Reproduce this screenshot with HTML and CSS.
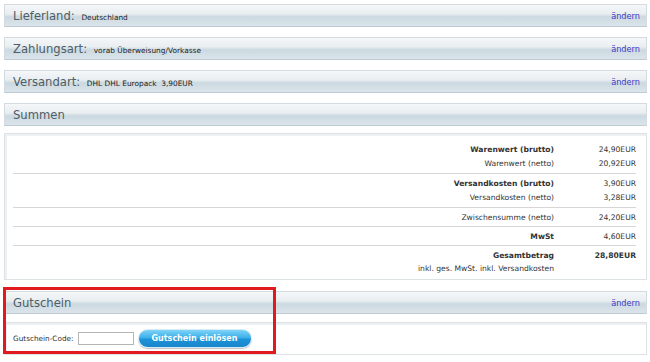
FILE: index.html
```html
<!DOCTYPE html>
<html lang="de">
<head>
    <meta charset="UTF-8">
    <title>Bestellung prüfen</title>
    <link rel="stylesheet" href="styles.css">
</head>
<body>
    <div class="checkout">
        <div class="bar">
            <h2>Lieferland: <span class="bar-value">Deutschland</span></h2>
            <a href="#" class="change-link">ändern</a>
        </div>

        <div class="bar">
            <h2>Zahlungsart: <span class="bar-value">vorab Überweisung/Vorkasse</span></h2>
            <a href="#" class="change-link">ändern</a>
        </div>

        <div class="bar">
            <h2>Versandart: <span class="bar-value">DHL DHL Europack&nbsp; 3,90EUR</span></h2>
            <a href="#" class="change-link">ändern</a>
        </div>

        <div class="bar bar-tight">
            <h2>Summen</h2>
        </div>

        <div class="box totals">
            <div class="totals-group">
                <div class="totals-row strong"><span class="label">Warenwert (brutto)</span><span class="value">24,90EUR</span></div>
                <div class="totals-row"><span class="label">Warenwert (netto)</span><span class="value">20,92EUR</span></div>
            </div>
            <div class="totals-group">
                <div class="totals-row strong"><span class="label">Versandkosten (brutto)</span><span class="value">3,90EUR</span></div>
                <div class="totals-row"><span class="label">Versandkosten (netto)</span><span class="value">3,28EUR</span></div>
            </div>
            <div class="totals-group single">
                <div class="totals-row"><span class="label">Zwischensumme (netto)</span><span class="value">24,20EUR</span></div>
            </div>
            <div class="totals-group single">
                <div class="totals-row strong"><span class="label">MwSt</span><span class="value">4,60EUR</span></div>
            </div>
            <div class="totals-group">
                <div class="totals-row strong total"><span class="label">Gesamtbetrag</span><span class="value">28,80EUR</span></div>
                <div class="totals-row note"><span class="label">inkl. ges. MwSt. inkl. Versandkosten</span><span class="value"></span></div>
            </div>
        </div>

        <div class="voucher">
            <div class="bar bar-tight">
                <h2>Gutschein</h2>
                <a href="#" class="change-link">ändern</a>
            </div>
            <div class="box voucher-form">
                <label for="voucher-code">Gutschein-Code:</label>
                <input type="text" id="voucher-code" class="voucher-input">
                <button class="btn-voucher">Gutschein einlösen</button>
            </div>
            <div class="highlight"></div>
        </div>
    </div>
</body>
</html>
```

FILE: styles.css
```css
body {
    font-family: 'DejaVu Sans', Verdana, sans-serif;
    margin: 0;
    padding: 4px 3px 4px 4px;
    background-color: #fff;
    color: #333;
}

.bar {
    display: flex;
    align-items: center;
    justify-content: space-between;
    box-sizing: border-box;
    height: 23px;
    padding: 0 6px 0 8px;
    margin-bottom: 10px;
    border: 1px solid #d3dbe0;
    border-bottom-color: #bccbd4;
    background: linear-gradient(#f5f7f8 0%, #e9eef1 42%, #ccd9e1 56%, #dbe4ea 100%);
}

.bar-tight {
    margin-bottom: 7px;
}

.bar h2 {
    margin: 0;
    font-size: 11.6px;
    font-weight: normal;
    color: #4f5d66;
    white-space: nowrap;
}

.bar-value {
    margin-left: 3px;
    font-size: 7.4px;
    color: #222;
}

.change-link {
    font-size: 8.2px;
    color: #3c3cc8;
    text-decoration: none;
}

.box {
    box-sizing: border-box;
    border: 1px solid #dde2e5;
    box-shadow: inset 2px 2px 0 #eef1f3;
    background-color: #fff;
}

.totals {
    height: 147px;
    padding: 6px 10px 0 8px;
    margin-bottom: 11px;
    font-size: 7.6px;
}

.totals-group {
    padding: 3px 0 2px;
    border-bottom: 1px solid #d6d6d6;
}

.totals-group:last-child {
    border-bottom: none;
}

.totals-row {
    display: flex;
    justify-content: flex-end;
    line-height: 14px;
}

.single .totals-row {
    line-height: 13px;
}

.note {
    line-height: 11px;
}

.totals-row .label {
    text-align: right;
}

.totals-row .value {
    width: 82px;
    flex-shrink: 0;
    text-align: right;
    font-weight: normal;
}

.strong .label {
    font-weight: bold;
}

.total .value {
    font-weight: bold;
}

.voucher {
    position: relative;
}

.voucher .bar {
    margin-bottom: 8px;
}

.voucher-form {
    display: flex;
    align-items: center;
    height: 33px;
    padding: 0 8px;
    font-size: 7.3px;
}

.voucher-form label {
    margin-right: 4px;
}

.voucher-input {
    box-sizing: border-box;
    width: 56px;
    height: 13px;
    padding: 0;
    border: 1px solid #b5b5b5;
    margin: 0 4px 0 0;
}

.btn-voucher {
    box-sizing: border-box;
    width: 114px;
    height: 19px;
    padding: 0;
    border: 1px solid #d4ecf8;
    border-radius: 10px;
    background: linear-gradient(#7fd3f6 0%, #3bb0ea 45%, #1c92d8 55%, #1a86cc 100%);
    box-shadow: 0 1px 1px rgba(0, 0, 0, 0.25);
    color: #fff;
    font-family: inherit;
    font-size: 8px;
    font-weight: bold;
    cursor: pointer;
}

/* red marker drawn over the voucher block */
.highlight {
    position: absolute;
    left: -1px;
    top: -4px;
    width: 273px;
    height: 67px;
    box-sizing: border-box;
    border: 3px solid #e01a1f;
    pointer-events: none;
}
```
